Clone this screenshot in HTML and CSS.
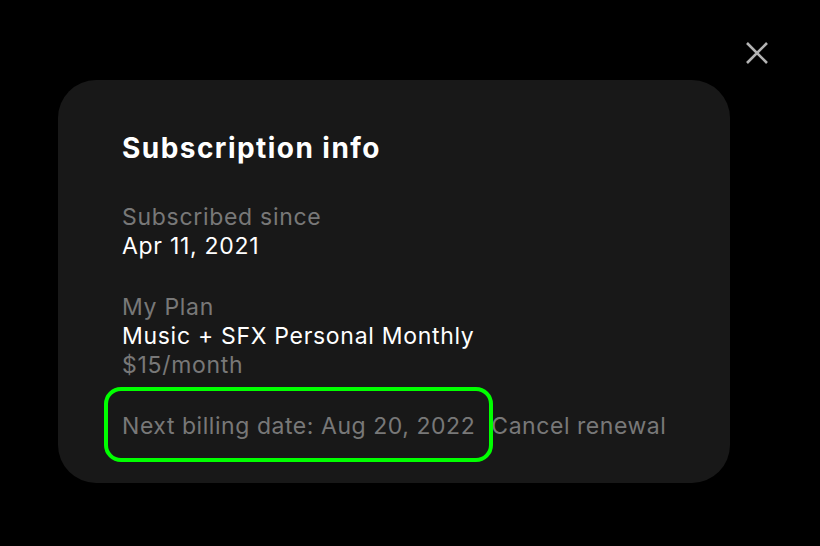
FILE: index.html
```html
<!DOCTYPE html>
<html>
<head>
<meta charset="utf-8">
<link rel="stylesheet" href="styles.css">
</head>
<body>
<div class="screen">
  <button class="close" aria-label="Close">
    <svg width="24" height="24" viewBox="0 0 24 24"><path d="M2 2 L22 22 M22 2 L2 22" stroke="#b3b3b3" stroke-width="2.6" stroke-linecap="butt" fill="none"/></svg>
  </button>
  <div class="card">
    <h1 class="title">Subscription info</h1>
    <div class="group">
      <div class="label">Subscribed since</div>
      <div class="value">Apr 11, 2021</div>
    </div>
    <div class="group">
      <div class="label">My Plan</div>
      <div class="value">Music + SFX Personal Monthly</div>
      <div class="label">$15/month</div>
    </div>
    <div class="billing">
      <span class="next">Next billing date: Aug 20, 2022</span><span class="cancel">Cancel renewal</span>
    </div>
  </div>
</div>
</body>
</html>
```
FILE: styles.css
```css
* { box-sizing: border-box; }
html, body { margin: 0; padding: 0; background: #000; }
body { font-family: Inter, "Liberation Sans", sans-serif; }
.screen {
  width: 820px; height: 546px; position: relative;
  padding: 80px 0 0 58px;
}
.close {
  position: absolute; left: 745px; top: 41px;
  width: 24px; height: 24px; padding: 0; border: 0; background: none;
  display: block;
}
.close svg { display: block; }
.card {
  width: 672px; height: 403px;
  background: #181818;
  border-radius: 38px;
  padding: 50px 0 0 64px;
}
.title {
  margin: 0 0 37px 0;
  font-size: 28px; line-height: 36px; font-weight: 700;
  color: #fff; letter-spacing: 1.45px;
}
.group { margin-bottom: 32px; font-size: 23px; line-height: 29px; letter-spacing: 0.7px; }
.label { color: #787878; }
.value { color: #fff; }
.billing { font-size: 23px; line-height: 29px; letter-spacing: 0.55px; color: #787878; display: flex; }
.next { position: relative; }
.next::after {
  content: ""; position: absolute;
  left: -18px; right: -18px; top: -25px; bottom: -21px;
  border: 4px solid #00ff00; border-radius: 17px;
}
.cancel { margin-left: 16px; }
```
